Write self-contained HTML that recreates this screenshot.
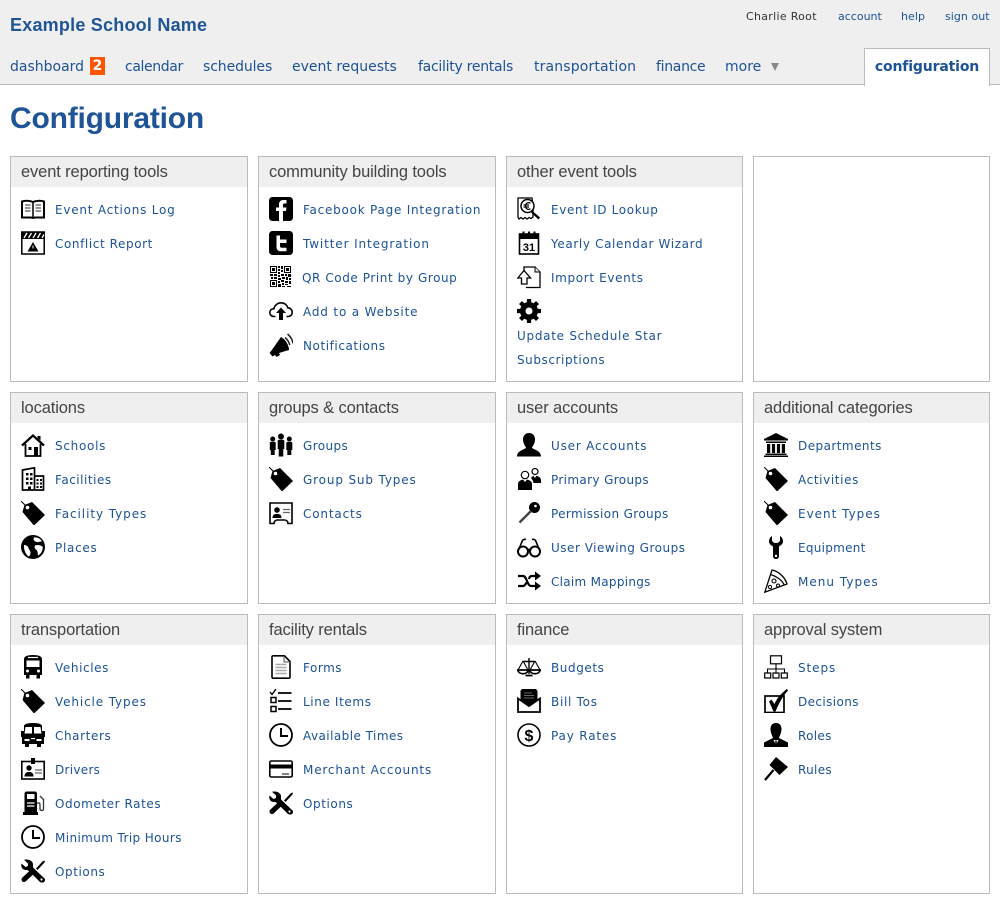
<!DOCTYPE html>
<html><head><meta charset="utf-8"><title>Configuration</title>
<style>
html,body{margin:0;padding:0;background:#fff;width:1000px;height:900px;overflow:hidden}
body{position:relative;font-family:"DejaVu Sans",Verdana,sans-serif;color:#1c5296}
a{color:#1c5296;text-decoration:none}
#hd{position:absolute;left:0;top:0;width:1000px;height:84px;background:#efefef;border-bottom:1px solid #bbb}
#sn{position:absolute;left:10px;top:15px;font:bold 18px/21px "Liberation Sans",Arial,sans-serif;color:#1f5596;letter-spacing:.22px}
.t{position:absolute;top:10px;font-size:11px;line-height:14px;letter-spacing:.3px;white-space:nowrap}
.n{position:absolute;top:58px;font-size:14px;line-height:18px;white-space:nowrap}
#bd{position:absolute;left:90px;top:57px;width:15px;height:18px;background:#f50;color:#fff;font:bold 14px/18px "DejaVu Sans",sans-serif;text-align:center}
#tri{position:absolute;left:771px;top:63px;width:0;height:0;border-left:4px solid transparent;border-right:4px solid transparent;border-top:8px solid #888}
#tab{position:absolute;left:864px;top:48px;width:124px;height:37px;background:#fff;border:1px solid #bbb;border-bottom:0;text-align:center;font-size:14px;font-weight:bold;line-height:37px;letter-spacing:-.15px;color:#1c5296}
h1{position:absolute;left:10px;top:101px;margin:0;font:bold 30px/36px "Liberation Sans",Arial,sans-serif;color:#1f5596;letter-spacing:-.2px}
.p{position:absolute;box-sizing:border-box;border:1px solid #bbb;background:#fff}
.p h2{margin:0;height:30px;background:#efefef;padding-left:10px;font:normal 16.5px/30px "Liberation Sans",Arial,sans-serif;color:#444;white-space:nowrap;letter-spacing:-.13px}
.i{position:absolute;left:44px;margin-top:1px;font-size:12px;line-height:24px;letter-spacing:.72px;white-space:nowrap}
.p svg{position:absolute;left:10px;width:24px;height:24px;overflow:visible}
</style></head><body>
<svg width="0" height="0" style="position:absolute"><defs>
<symbol id="book" viewBox="0 0 24 24"><path d="M1 4.500C4 3.500 9 3.500 12 5C15 3.500 20 3.500 23 4.500V20.500H14L12 21L10 20.500H1Z" fill="#fff" stroke="#000" stroke-width="2"/><path d="M12 5V20" stroke="#000" stroke-width="1.500"/><path d="M4 8H9.500M4 11H9.500M4 14H9.500M14.500 8H20M14.500 11H20M14.500 14H20" stroke="#555" stroke-width="1.200"/></symbol>
<symbol id="clap" viewBox="0 0 24 24"><rect x=".8" y="1" width="22.400" height="22" fill="#fff" stroke="#000" stroke-width="1.500"/><rect y="1" width="24" height="7" fill="#000"/><path d="M3 7L6 2M7.500 7L10.500 2M12 7L15 2M16.500 7L19.500 2M21 7L23 3.500" stroke="#fff" stroke-width="1.300"/><path d="M12 11L17.500 20.500H6.500Z" fill="#000"/><path d="M12 14.500V17.500" stroke="#fff" stroke-width="1"/></symbol>
<symbol id="fb" viewBox="0 0 24 24"><rect width="24" height="24" rx="3.500" fill="#000"/><path d="M10 24V14H7V10.500H10V7.500C10 4.500 11.800 3 14.500 3H17.500V6.500H15.500C14.500 6.500 14 7 14 8V10.500H17.500L17 14H14V24Z" fill="#fff"/></symbol>
<symbol id="tw" viewBox="0 0 24 24"><rect width="24" height="24" rx="3.500" fill="#000"/><path d="M7.500 4.500H11V8.500H17.500V12H11V15C11 16.200 11.700 16.800 13 16.800H17.500V20.300H12C9 20.300 7.500 18.500 7.500 16Z" fill="#fff"/></symbol>
<symbol id="qr" viewBox="0 0 24 24"><path fill="#000" fill-rule="evenodd" d="M1 1h7v7H1zM2 2v5h5V2zM3 3h3v3H3zM15 1h7v7h-7zM16 2v5h5V2zM17 3h3v3h-3zM1 15h7v7H1zM2 16v5h5v-5zM3 17h3v3H3zM9 1h2v2H9zM12 1h2v3h-2zM9 4h2v2H9zM12 5h2v2h-2zM9 7h2v2H9zM1 9h3v2H1zM5 9h3v2H5zM9 10h2v2H9zM12 9h3v2h-3zM16 9h2v2h-2zM19 9h3v3h-3zM2 12h2v2H2zM5 12h3v2H5zM9 13h3v2H9zM13 12h3v2h-3zM17 12h2v3h-2zM20 13h2v2h-2zM9 16h2v2H9zM12 15h3v2h-3zM16 16h3v2h-3zM20 16h2v3h-2zM9 19h3v3H9zM13 18h2v2h-2zM16 19h3v1h-3zM13 21h3v1h-3zM18 21h4v1h-4z"/></symbol>
<symbol id="cloud" viewBox="0 0 24 24"><path d="M6.500 17.500H5C2.500 17.500 .8 15.800 .8 13.500S2.500 9.800 4.800 9.800C5.500 6.500 8.500 3.800 12 3.800C15.500 3.800 18 6 18.800 8.800C21.500 8.800 23.200 11 23.200 13.300S21.500 17.500 19 17.500H17.500" fill="none" stroke="#000" stroke-width="1.600"/><path d="M12 8.500L17 14H14V21H10V14H7Z" fill="#000"/></symbol>
<symbol id="mega" viewBox="0 0 24 24"><path d="M12 4L2.500 17.500L.5 20L3.500 23.500L6 22L7.500 24L11 22L10 20L20 17C20 12 16.500 6.500 12 4Z" fill="#000"/><path d="M16 4.500C18.500 6.500 20 9 20.800 12M18.500 1C21.500 3.500 23.500 7 24 10.500" fill="none" stroke="#222" stroke-width="1.500"/></symbol>
<symbol id="eur" viewBox="0 0 24 24"><path d="M1 1H15L16 9V20L14 21.500L12 20.500L10 22L8 20.500L6 22L4 20.500L2 22L1 20Z" fill="#fff" stroke="#000" stroke-width="1.300"/><circle cx="10.500" cy="9" r="6.500" fill="#fff" stroke="#000" stroke-width="1.500"/><path d="M13.500 6.200C11.500 4.800 8.500 6 8.500 9S11.500 13.200 13.500 11.800M6.500 8H12M6.500 10H12" fill="none" stroke="#000" stroke-width="1.200"/><path d="M15.500 14L23 20.500L21.500 22.500L14 15.500Z" fill="#000"/></symbol>
<symbol id="cal" viewBox="0 0 24 24"><rect x="2.500" y="3" width="19" height="20" fill="#fff" stroke="#000" stroke-width="1.600"/><rect x="2.500" y="3" width="19" height="5" fill="#000"/><path d="M6.500 .5V5M12 .5V5M17.500 .5V5" stroke="#000" stroke-width="2"/><text x="12" y="20" font-family="Liberation Sans,sans-serif" font-weight="bold" font-size="11" text-anchor="middle" fill="#000">31</text></symbol>
<symbol id="imp" viewBox="0 0 24 24"><path d="M7 7V2H18L23 7V22.500H9" fill="#fff" stroke="#000" stroke-width="1.300"/><path d="M18 2V7H23" fill="#ddd" stroke="#000" stroke-width="1"/><path d="M7 5.500L.8 13H4.500V19H10V13H13.500Z" fill="#fff" stroke="#000" stroke-width="1.300"/></symbol>
<symbol id="gear" viewBox="0 0 24 24"><circle cx="12" cy="12" r="9" fill="#000"/><path d="M12 0V24M0 12H24M3.500 3.500L20.500 20.500M20.500 3.500L3.500 20.500" stroke="#000" stroke-width="4.200"/><circle cx="12" cy="12" r="3.500" fill="#fff"/></symbol>
<symbol id="home" viewBox="0 0 24 24"><path d="M1 12.500L12 2.500L23 12.500" fill="none" stroke="#000" stroke-width="2.200"/><path d="M16.500 3H19.500V7.500L16.500 5Z" fill="#000"/><path d="M4.500 11V23H19.500V11" fill="none" stroke="#000" stroke-width="1.800"/><rect x="13" y="14" width="4" height="9" fill="#000"/><rect x="7.500" y="14" width="3" height="3" fill="#000"/></symbol>
<symbol id="bld" viewBox="0 0 24 24"><path d="M1.500 23V3L13.500 .8V23ZM13.500 9H22.500V23H13.500Z" fill="#fff" stroke="#000" stroke-width="1.700"/><path d="M5 6h2.500v2.500H5zM9 6h2.500v2.500H9zM5 10.500h2.500V13H5zM9 10.500h2.500V13H9zM5 15h2.500v2.500H5zM9 15h2.500v2.500H9zM7 19.500h3V23H7zM15.500 12h2v2h-2zM19 12h2v2h-2zM15.500 15.500h2v2h-2zM19 15.500h2v2h-2zM15.500 19h2v2h-2zM19 19h2v2h-2z" fill="#000"/></symbol>
<symbol id="tag" viewBox="0 0 24 24"><path d="M3.500 4L11 1L24 14L13 24.500L1.500 11Z" fill="#000"/><path d="M0 0L7 7" stroke="#000" stroke-width="1"/><circle cx="6.500" cy="6.500" r="1.800" fill="#fff"/></symbol>
<symbol id="globe" viewBox="0 0 24 24"><circle cx="12" cy="12" r="12" fill="#000"/><path d="M13 2.500C16 2 19.500 3.500 21 6.500C19 6 18 7.500 16.500 7C15 7 13 6 12.500 4.500ZM3 10C5 10 7 11 7.500 13C8 15 9.500 15.500 9.500 17.500C9.500 19.500 9 21 7.500 21.500C5 19.500 2.500 15 3 10ZM14 10.500C16.500 9.500 20 10 21.800 12C22 15 20 19 17 20.500C16.500 18 17 16.500 15.500 15C14 14 13 12 14 10.500Z" fill="#fff"/></symbol>
<symbol id="grp" viewBox="0 0 24 24"><circle cx="12" cy="3.500" r="3" fill="#000"/><path d="M8.700 8C8.700 7 9.500 6.800 12 6.800S15.300 7 15.300 8V16H14.300V23.500H9.700V16H8.700Z" fill="#000"/><circle cx="3.700" cy="6" r="2.500" fill="#000"/><path d="M.8 10C.8 9 1.500 8.800 3.700 8.800S6.700 9 6.700 10V17H5.700V22H1.800V17H.8Z" fill="#000"/><circle cx="20.300" cy="6" r="2.500" fill="#000"/><path d="M17.300 10C17.300 9 18 8.800 20.300 8.800S23.300 9 23.300 10V17H22.300V22H18.300V17H17.300Z" fill="#000"/></symbol>
<symbol id="ctc" viewBox="0 0 24 24"><path d="M1 2H23V22.500H19C19 20 17 19 15.500 19H8.500C7 19 5 20 5 22.500H1Z" fill="#fff" stroke="#000" stroke-width="1.600"/><circle cx="8" cy="9" r="2.800" fill="#000"/><path d="M3.500 17C3.500 13 6 13 8 13S12.500 13 12.500 17Z" fill="#000"/><path d="M14 8.500H21M14 11.500H21" stroke="#666" stroke-width="1.200"/></symbol>
<symbol id="usr" viewBox="0 0 24 24"><path d="M12 0C16 0 18 3 18 6.500C18 10 16 13 15 14.500C15 16.500 24 17 24 23.500H0C0 17 9 16.500 9 14.500C8 13 6 10 6 6.500C6 3 8 0 12 0Z" fill="#000"/></symbol>
<symbol id="pgr" viewBox="0 0 24 24"><circle cx="8" cy="8" r="3.700" fill="#fff" stroke="#000" stroke-width="1.200"/><path d="M1 23V17C1 14 4 13 6 12.500L8 15L10 12.500C12 13 15 14 15 17V23Z" fill="#000"/><circle cx="18" cy="4.500" r="3" fill="#fff" stroke="#000" stroke-width="1.200"/><path d="M14 11C15 9.500 16 9 16.500 8.800L18 11L19.500 8.800C21 9.500 24 10 24 13.500V16H16.500C16 13.500 15 12 14 11Z" fill="#000"/></symbol>
<symbol id="key" viewBox="0 0 24 24"><circle cx="17.500" cy="6.500" r="5.500" fill="#000"/><circle cx="18.500" cy="5" r="1.300" fill="#fff"/><path d="M14 10L2.500 21.500" stroke="#444" stroke-width="2.500"/></symbol>
<symbol id="gls" viewBox="0 0 24 24"><circle cx="6" cy="16.500" r="5" fill="none" stroke="#000" stroke-width="2"/><circle cx="18" cy="16.500" r="5" fill="none" stroke="#000" stroke-width="2"/><path d="M10.500 15C11.500 14.300 12.500 14.300 13.500 15M1.500 15L5.500 5.500C6 4.500 8 4 9 4.500M22.500 15L18.500 5.500C18 4.500 16 4 15 4.500" fill="none" stroke="#000" stroke-width="1.600"/></symbol>
<symbol id="shf" viewBox="0 0 24 24"><path d="M1 7H6C10 7 10 17 14 17H19M1 17H6C7.500 17 8.500 15.500 9.500 13.500M12 10C12.500 8 13 7 15 7H19" fill="none" stroke="#000" stroke-width="2.200"/><path d="M18 2.500L24 7L18 11.500ZM18 12.500L24 17L18 21.500Z" fill="#000"/></symbol>
<symbol id="bank" viewBox="0 0 24 24"><path d="M12 0L24 6V7.500H0V6Z" fill="#000"/><path d="M2 8.500H22V10H2ZM3 11h3.200V20H3zM7.900 11h3.200V20H7.900zM12.900 11h3.200V20h-3.200zM17.800 11H21V20h-3.200zM1.500 20.500H22.500V22H1.500ZM0 22.500H24V24H0Z" fill="#000"/></symbol>
<symbol id="wr1" viewBox="0 0 24 24"><path d="M8 1C6 2 5 4.500 5 6.500C5 9 7.500 10.500 9 11.500V21C9 23 10.500 24 12 24S15 23 15 21V11.500C16.500 10.500 19 9 19 6.500C19 4.500 18 2 16 1V6L13.500 8H10.500L8 6Z" fill="#000"/><circle cx="12" cy="21" r="1.200" fill="#fff"/></symbol>
<symbol id="piz" viewBox="0 0 24 24"><path d="M.8 23.200L8 1C14 2 21 8 23 15Z" fill="#fff" stroke="#000" stroke-width="1.300"/><path d="M6.500 5.500C12 7 18 11 20 15.500" fill="none" stroke="#000" stroke-width="1.200"/><circle cx="10" cy="12" r="2" fill="#fff" stroke="#000" stroke-width="1.100"/><circle cx="6" cy="18" r="1.600" fill="none" stroke="#000"/><circle cx="14" cy="16.500" r="1.500" fill="none" stroke="#000"/></symbol>
<symbol id="bus" viewBox="0 0 24 24"><path d="M3 4C3 1.500 6 0 12 0S21 1.500 21 4V20H19V23.500H15.500V20H8.500V23.500H5V20H3Z" fill="#000"/><path d="M5.500 5.500H18.500V12H5.500Z" fill="#fff"/><path d="M7 2.500H17" stroke="#fff" stroke-width="1.200"/><circle cx="6.500" cy="16" r="1.500" fill="#fff"/><circle cx="17.500" cy="16" r="1.500" fill="#fff"/></symbol>
<symbol id="chr" viewBox="0 0 24 24"><path d="M3 3C3 1 7 0 12 0S21 1 21 3V8H24V14H23V21H20V24H16V21H8V24H4V21H1V14H0V8H3Z" fill="#000"/><path d="M4.500 4H11V10.500H3.500ZM13 4H19.500L20.500 10.500H13Z" fill="#fff"/><rect x="3.500" y="16" width="5" height="2" fill="#fff"/><rect x="15.500" y="16" width="5" height="2" fill="#fff"/><rect x="10" y="15" width="4" height="1.200" fill="#fff"/></symbol>
<symbol id="drv" viewBox="0 0 24 24"><rect x=".8" y="4.500" width="22.400" height="17.500" fill="#fff" stroke="#000" stroke-width="1.600"/><rect x="10" y="1" width="4" height="6" fill="#000"/><circle cx="8" cy="11" r="2.700" fill="#000"/><path d="M3.500 19.500C3.500 15.500 6 15 8 15S12.500 15.500 12.500 19.500Z" fill="#000"/><path d="M14 13H21M14 16H21" stroke="#666" stroke-width="1.200"/></symbol>
<symbol id="gas" viewBox="0 0 24 24"><path d="M3.500 2.500C3.500 1.500 4.500 .5 5.500 .5H14C15 .5 16 1.500 16 2.500V21H17V24H2V21H3.500Z" fill="#000"/><rect x="6" y="3" width="7.500" height="5" fill="#fff"/><path d="M6 12H13.500M6 15H13.500" stroke="#fff" stroke-width="1.300"/><path d="M16 12H18C19 12 19 13 19 14V18C19 20 22.500 20 22.500 18V8.500L19 5" fill="none" stroke="#333" stroke-width="1.300"/></symbol>
<symbol id="clk" viewBox="0 0 24 24"><circle cx="12" cy="12" r="11" fill="#fff" stroke="#000" stroke-width="1.800"/><path d="M12 5V13H19" fill="none" stroke="#000" stroke-width="2"/></symbol>
<symbol id="tls" viewBox="0 0 24 24"><path d="M3 0.800L7 4.500V7L4.500 8L.5 4.500C-.5 8 1.500 11 5 11C6.500 11 7.500 11.500 8.500 12.500L18 22C19.500 24 22.500 24 23.500 22.500C24.500 21 24 19.500 22.500 18.500L12.500 9C11.800 8 12 7 12 5.500C12 2 8 -.5 3 .8Z" fill="#000"/><path d="M15 9.500L21.500 2.500L23.500 1.500L24 2.500L23 4L16.500 11Z" fill="#000"/><path d="M10.500 13.500L3 20.500" stroke="#000" stroke-width="5" stroke-linecap="round"/><circle cx="20.500" cy="20.500" r="1.100" fill="#fff"/></symbol>
<symbol id="doc" viewBox="0 0 24 24"><path d="M3 2C3 1 3.500 .8 4.500 .8H15.500L21 6.500V22C21 23 20.500 23.200 19.500 23.200H4.500C3.500 23.200 3 23 3 22Z" fill="#fff" stroke="#000" stroke-width="1.600"/><path d="M15 1V7H21" fill="none" stroke="#555"/><path d="M6.500 9.500H17.500M6.500 12.500H17.500M6.500 15.500H17.500M6.500 18.500H17.500" stroke="#aaa" stroke-width="1.500"/></symbol>
<symbol id="lst" viewBox="0 0 24 24"><path d="M1 3L3 5.500L7 0" fill="none" stroke="#000" stroke-width="1.400"/><path d="M9 4H22.500M9 12H22.500M9 20H22.500" stroke="#000" stroke-width="1.700"/><rect x="2" y="8.500" width="5" height="5" fill="none" stroke="#000" stroke-width="1.500"/><rect x="2" y="17.500" width="5" height="5" fill="none" stroke="#000" stroke-width="1.500"/></symbol>
<symbol id="cc" viewBox="0 0 24 24"><rect x=".8" y="4" width="22.400" height="16" rx="1.500" fill="#fff" stroke="#000" stroke-width="1.600"/><rect y="7.500" width="24" height="4" fill="#000"/><path d="M13 17H20" stroke="#333" stroke-width="1.200"/></symbol>
<symbol id="scl" viewBox="0 0 24 24"><path d="M12 3V19M6 6.500H18" stroke="#000" stroke-width="1.400"/><path d="M8.500 20.500H15.500" stroke="#000" stroke-width="1.800"/><path d="M6 6L1 15M6 6L11 15M18 6L13 15M18 6L23 15" stroke="#000" stroke-width="1.100" fill="none"/><path d="M.8 15C1.500 20 10.500 20 11.200 15ZM12.800 15C13.500 20 22.500 20 23.200 15Z" fill="#fff" stroke="#000" stroke-width="1.700"/></symbol>
<symbol id="bil" viewBox="0 0 24 24"><path d="M5 0H19L20.500 2V11L12 16L3.500 11V1.500Z" fill="#000"/><path d="M7 4H15M7 6.500H17M7 9H17" stroke="#666" stroke-width="1.100"/><path d="M1 9.500L12 17L23 9.500V23H1Z" fill="#fff" stroke="#000" stroke-width="1.800"/></symbol>
<symbol id="usd" viewBox="0 0 24 24"><circle cx="12" cy="12" r="11" fill="#fff" stroke="#000" stroke-width="1.600"/><text x="12" y="18" font-family="Liberation Sans,sans-serif" font-weight="bold" font-size="16" text-anchor="middle" fill="#000">$</text></symbol>
<symbol id="org" viewBox="0 0 24 24"><rect x="6.500" y=".8" width="11" height="8" fill="#fff" stroke="#000" stroke-width="1.200"/><path d="M12 9V14M3.500 18V14H20.500V18M12 14V18" fill="none" stroke="#000" stroke-width="1.100"/><path d="M.7 18h6v5h-6zM9 18h6v5H9zM17.300 18h6v5h-6z" fill="#fff" stroke="#000" stroke-width="1.200"/></symbol>
<symbol id="chk" viewBox="0 0 24 24"><rect x="1" y="7" width="19" height="16.500" fill="#fff" stroke="#000" stroke-width="1.700"/><path d="M5 12.500L7.500 10.500L10.500 15C13 9 17.500 4 23 0L24 1.500C19 7 15 14 11.500 22.500H9.500Z" fill="#000"/></symbol>
<symbol id="rol" viewBox="0 0 24 24"><path d="M12 0C16 0 17.500 3 17.500 6C17.500 10 15.500 13 15 15L24 19.500V24H0V19.500L9 15C8.500 13 6.500 10 6.500 6C6.500 3 8 0 12 0Z" fill="#000"/><path d="M9.500 17L12 22L14.500 17" fill="#fff"/><path d="M12 17.500V22" stroke="#000" stroke-width="1.500"/></symbol>
<symbol id="gav" viewBox="0 0 24 24"><path d="M12 0L24 10L15.500 18L5.500 8Z" fill="#000"/><path d="M9.500 13L1 23" stroke="#000" stroke-width="2.200"/></symbol>
</defs></svg>

<div id="hd"></div>
<div id="sn">Example School Name</div>
<span class="t" style="left:746px;color:#333">Charlie Root</span>
<a class="t" href="#" style="left:838px;letter-spacing:0">account</a>
<a class="t" href="#" style="left:901px;letter-spacing:.05px">help</a>
<a class="t" href="#" style="left:945px;letter-spacing:.05px">sign out</a>
<a class="n" href="#" style="left:10px">dashboard</a><span id="bd">2</span>
<a class="n" href="#" style="left:125px;letter-spacing:-.38px">calendar</a>
<a class="n" href="#" style="left:203px;letter-spacing:-.1px">schedules</a>
<a class="n" href="#" style="left:292px">event requests</a>
<a class="n" href="#" style="left:418px;letter-spacing:-.27px">facility rentals</a>
<a class="n" href="#" style="left:534px;letter-spacing:.15px">transportation</a>
<a class="n" href="#" style="left:656px;letter-spacing:-.3px">finance</a>
<a class="n" href="#" style="left:725px">more</a><span id="tri"></span>
<a id="tab" href="#">configuration</a>
<h1>Configuration</h1>

<div class="p" style="left:10px;top:156px;width:238px;height:226px"><h2>event reporting tools</h2>
<svg style="top:40px"><use href="#book"/></svg><a class="i" href="#" style="top:40px;letter-spacing:.78px">Event Actions Log</a>
<svg style="top:74px"><use href="#clap"/></svg><a class="i" href="#" style="top:74px;letter-spacing:.59px">Conflict Report</a></div>

<div class="p" style="left:258px;top:156px;width:238px;height:226px"><h2>community building tools</h2>
<svg style="top:40px"><use href="#fb"/></svg><a class="i" href="#" style="top:40px;letter-spacing:.76px">Facebook Page Integration</a>
<svg style="top:74px"><use href="#tw"/></svg><a class="i" href="#" style="top:74px;letter-spacing:.88px">Twitter Integration</a>
<svg style="top:108px"><use href="#qr"/></svg><a class="i" href="#" style="top:108px;left:43px;letter-spacing:.58px">QR Code Print by Group</a>
<svg style="top:142px"><use href="#cloud"/></svg><a class="i" href="#" style="top:142px;letter-spacing:.84px">Add to a Website</a>
<svg style="top:176px"><use href="#mega"/></svg><a class="i" href="#" style="top:176px;letter-spacing:.57px">Notifications</a></div>

<div class="p" style="left:506px;top:156px;width:237px;height:226px"><h2>other event tools</h2>
<svg style="top:40px"><use href="#eur"/></svg><a class="i" href="#" style="top:40px;letter-spacing:.65px">Event ID Lookup</a>
<svg style="top:74px"><use href="#cal"/></svg><a class="i" href="#" style="top:74px;letter-spacing:.63px">Yearly Calendar Wizard</a>
<svg style="top:108px"><use href="#imp"/></svg><a class="i" href="#" style="top:108px;letter-spacing:.64px">Import Events</a>
<svg style="top:142px"><use href="#gear"/></svg><a class="i" href="#" style="top:166px;left:10px">Update Schedule Star<br><span style="letter-spacing:.57px">Subscriptions</span></a></div>

<div class="p" style="left:753px;top:156px;width:237px;height:226px"></div>

<div class="p" style="left:10px;top:392px;width:238px;height:212px"><h2>locations</h2>
<svg style="top:40px"><use href="#home"/></svg><a class="i" href="#" style="top:40px">Schools</a>
<svg style="top:74px"><use href="#bld"/></svg><a class="i" href="#" style="top:74px;letter-spacing:.52px">Facilities</a>
<svg style="top:108px"><use href="#tag"/></svg><a class="i" href="#" style="top:108px;letter-spacing:.93px">Facility Types</a>
<svg style="top:142px"><use href="#globe"/></svg><a class="i" href="#" style="top:142px">Places</a></div>

<div class="p" style="left:258px;top:392px;width:238px;height:212px"><h2>groups &amp; contacts</h2>
<svg style="top:40px"><use href="#grp"/></svg><a class="i" href="#" style="top:40px;letter-spacing:.39px">Groups</a>
<svg style="top:74px"><use href="#tag"/></svg><a class="i" href="#" style="top:74px;letter-spacing:.85px">Group Sub Types</a>
<svg style="top:108px"><use href="#ctc"/></svg><a class="i" href="#" style="top:108px;letter-spacing:.84px">Contacts</a></div>

<div class="p" style="left:506px;top:392px;width:237px;height:212px"><h2>user accounts</h2>
<svg style="top:40px"><use href="#usr"/></svg><a class="i" href="#" style="top:40px;letter-spacing:.8px">User Accounts</a>
<svg style="top:74px"><use href="#pgr"/></svg><a class="i" href="#" style="top:74px;letter-spacing:.36px">Primary Groups</a>
<svg style="top:108px"><use href="#key"/></svg><a class="i" href="#" style="top:108px;letter-spacing:.37px">Permission Groups</a>
<svg style="top:142px"><use href="#gls"/></svg><a class="i" href="#" style="top:142px;letter-spacing:.51px">User Viewing Groups</a>
<svg style="top:176px"><use href="#shf"/></svg><a class="i" href="#" style="top:176px;letter-spacing:.29px">Claim Mappings</a></div>

<div class="p" style="left:753px;top:392px;width:237px;height:212px"><h2>additional categories</h2>
<svg style="top:40px"><use href="#bank"/></svg><a class="i" href="#" style="top:40px;letter-spacing:.45px">Departments</a>
<svg style="top:74px"><use href="#tag"/></svg><a class="i" href="#" style="top:74px;letter-spacing:.62px">Activities</a>
<svg style="top:108px"><use href="#tag"/></svg><a class="i" href="#" style="top:108px;letter-spacing:.99px">Event Types</a>
<svg style="top:142px"><use href="#wr1"/></svg><a class="i" href="#" style="top:142px;letter-spacing:.28px">Equipment</a>
<svg style="top:176px"><use href="#piz"/></svg><a class="i" href="#" style="top:176px;letter-spacing:1.02px">Menu Types</a></div>

<div class="p" style="left:10px;top:614px;width:238px;height:280px"><h2>transportation</h2>
<svg style="top:40px"><use href="#bus"/></svg><a class="i" href="#" style="top:40px;letter-spacing:.6px">Vehicles</a>
<svg style="top:74px"><use href="#tag"/></svg><a class="i" href="#" style="top:74px;letter-spacing:.87px">Vehicle Types</a>
<svg style="top:108px"><use href="#chr"/></svg><a class="i" href="#" style="top:108px;letter-spacing:.6px">Charters</a>
<svg style="top:142px"><use href="#drv"/></svg><a class="i" href="#" style="top:142px;letter-spacing:.29px">Drivers</a>
<svg style="top:176px"><use href="#gas"/></svg><a class="i" href="#" style="top:176px;letter-spacing:.58px">Odometer Rates</a>
<svg style="top:210px"><use href="#clk"/></svg><a class="i" href="#" style="top:210px;letter-spacing:.39px">Minimum Trip Hours</a>
<svg style="top:244px"><use href="#tls"/></svg><a class="i" href="#" style="top:244px;letter-spacing:.58px">Options</a></div>

<div class="p" style="left:258px;top:614px;width:238px;height:280px"><h2>facility rentals</h2>
<svg style="top:40px"><use href="#doc"/></svg><a class="i" href="#" style="top:40px;letter-spacing:.52px">Forms</a>
<svg style="top:74px"><use href="#lst"/></svg><a class="i" href="#" style="top:74px;letter-spacing:.62px">Line Items</a>
<svg style="top:108px"><use href="#clk"/></svg><a class="i" href="#" style="top:108px;letter-spacing:.45px">Available Times</a>
<svg style="top:142px"><use href="#cc"/></svg><a class="i" href="#" style="top:142px;letter-spacing:.84px">Merchant Accounts</a>
<svg style="top:176px"><use href="#tls"/></svg><a class="i" href="#" style="top:176px;letter-spacing:.58px">Options</a></div>

<div class="p" style="left:506px;top:614px;width:237px;height:280px"><h2>finance</h2>
<svg style="top:40px"><use href="#scl"/></svg><a class="i" href="#" style="top:40px;letter-spacing:.58px">Budgets</a>
<svg style="top:74px"><use href="#bil"/></svg><a class="i" href="#" style="top:74px">Bill Tos</a>
<svg style="top:108px"><use href="#usd"/></svg><a class="i" href="#" style="top:108px;letter-spacing:.83px">Pay Rates</a></div>

<div class="p" style="left:753px;top:614px;width:237px;height:280px"><h2>approval system</h2>
<svg style="top:40px"><use href="#org"/></svg><a class="i" href="#" style="top:40px;letter-spacing:.92px">Steps</a>
<svg style="top:74px"><use href="#chk"/></svg><a class="i" href="#" style="top:74px;letter-spacing:.39px">Decisions</a>
<svg style="top:108px"><use href="#rol"/></svg><a class="i" href="#" style="top:108px;letter-spacing:.32px">Roles</a>
<svg style="top:142px"><use href="#gav"/></svg><a class="i" href="#" style="top:142px;letter-spacing:.32px">Rules</a></div>
</body></html>
